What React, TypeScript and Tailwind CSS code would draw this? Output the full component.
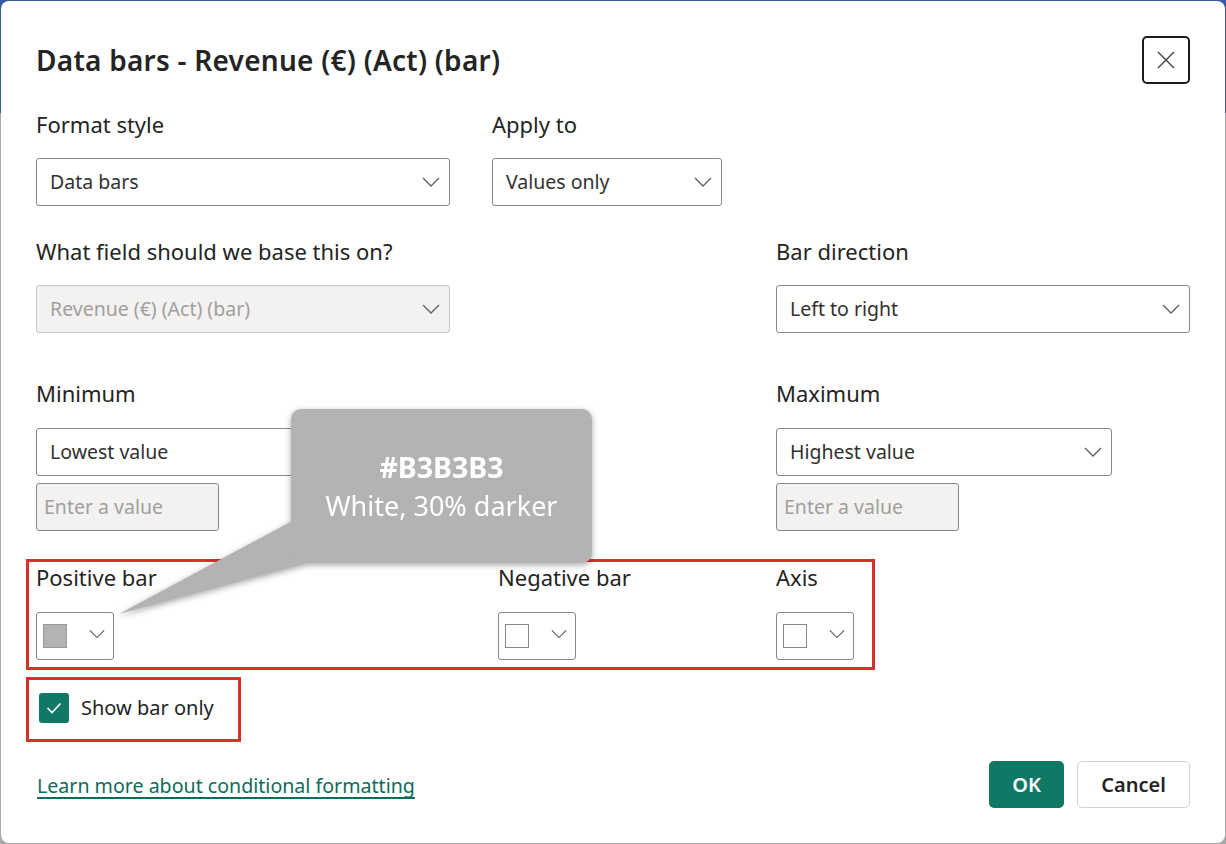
import type React from "react";

const font = { fontFamily: '"Noto Sans", "Open Sans", sans-serif' };

function Chevron({ className = "" }: { className?: string }) {
  return (
    <svg width="18" height="10" viewBox="0 0 18 10" className={className}>
      <polyline points="1,1 9,9 17,1" fill="none" stroke="#605e5c" strokeWidth="1.3" />
    </svg>
  );
}

function Select({
  value,
  width,
  disabled = false,
}: {
  value: string;
  width: string;
  disabled?: boolean;
}) {
  return (
    <div
      className={`${width} h-[48px] flex items-center justify-between pl-[13px] pr-[9px] rounded-[3px] border ${
        disabled ? "bg-[#f3f2f1] border-[#c8c6c4] text-[#a19f9d]" : "bg-white border-[#8a8886] text-[#323130]"
      }`}
    >
      <span className="text-[19.5px]">{value}</span>
      <Chevron />
    </div>
  );
}

function ValueInput() {
  return (
    <div className="w-[183px] h-[48px] flex items-center pl-[7px] bg-[#f3f2f1] border border-[#8a8886] rounded-[3px] text-[19.5px] text-[#a19f9d]">
      Enter a value
    </div>
  );
}

function ColorPicker({ color }: { color?: string }) {
  return (
    <div className="w-[78px] h-[48px] flex items-start pt-[11px] pl-[6px] bg-white border border-[#8a8886] rounded-[3px]">
      <div
        className={`w-[24px] h-[24px] border ${color ? "border-[#9a9a9a]" : "border-[#8a8886]"}`}
        style={{ backgroundColor: color ?? "#ffffff" }}
      />
      <Chevron className="ml-[22px] mt-[5px] w-[16px]" />
    </div>
  );
}

function Label({ children }: { children: React.ReactNode }) {
  return <div className="h-[28px] leading-[24px] text-[22px] text-[#242424]">{children}</div>;
}

export default function App() {
  return (
    <div
      className="w-[1226px] h-[844px] p-px bg-[linear-gradient(to_bottom,#3b5aa6_113px,#a8a8a8_113px)]"
      style={font}
    >
      <div className="relative w-full h-full bg-white rounded-[8px] pl-[35px] pr-[35px]">
        {/* header */}
        <div className="flex items-center justify-between pt-[35px]">
          <h1 className="text-[28px] font-semibold text-[#242424] tracking-[0.25px]">
            Data bars - Revenue (€) (Act) (bar)
          </h1>
          <button className="w-[48px] h-[48px] flex items-center justify-center border-2 border-[#1b1b1b] rounded-[5px]">
            <svg width="20" height="20" viewBox="0 0 20 20">
              <path d="M2 2 L18 18 M18 2 L2 18" stroke="#424242" strokeWidth="1.4" />
            </svg>
          </button>
        </div>

        {/* format style / apply to */}
        <div className="flex gap-[42px] mt-[28px]">
          <div className="flex flex-col gap-[18px]">
            <Label>Format style</Label>
            <Select value="Data bars" width="w-[414px]" />
          </div>
          <div className="flex flex-col gap-[18px]">
            <Label>Apply to</Label>
            <Select value="Values only" width="w-[230px]" />
          </div>
        </div>

        {/* field / direction */}
        <div className="flex justify-between mt-[33px]">
          <div className="flex flex-col gap-[18px]">
            <Label>What field should we base this on?</Label>
            <Select value="Revenue (€) (Act) (bar)" width="w-[414px]" disabled />
          </div>
          <div className="flex flex-col gap-[18px]">
            <Label>Bar direction</Label>
            <Select value="Left to right" width="w-[414px]" />
          </div>
        </div>

        {/* minimum / maximum */}
        <div className="flex justify-between mt-[48px]">
          <div className="flex flex-col">
            <Label>Minimum</Label>
            <div className="mt-[19px]">
              <Select value="Lowest value" width="w-[336px]" />
            </div>
            <div className="mt-[7px]">
              <ValueInput />
            </div>
          </div>
          <div className="flex flex-col w-[414px]">
            <Label>Maximum</Label>
            <div className="mt-[19px]">
              <Select value="Highest value" width="w-[336px]" />
            </div>
            <div className="mt-[7px]">
              <ValueInput />
            </div>
          </div>
        </div>

        {/* colors */}
        <div className="-ml-[10px] mt-[28px] w-[849px] h-[111px] border-[3px] border-[#d9302a] pl-[7px] pt-[3px] grid grid-cols-[462px_278px_78px]">
          <div className="flex flex-col gap-[19px]">
            <Label>Positive bar</Label>
            <ColorPicker color="#b3b3b3" />
          </div>
          <div className="flex flex-col gap-[19px]">
            <Label>Negative bar</Label>
            <ColorPicker />
          </div>
          <div className="flex flex-col gap-[19px]">
            <Label>Axis</Label>
            <ColorPicker />
          </div>
        </div>

        {/* show bar only */}
        <div className="-ml-[10px] mt-[7px] w-[215px] h-[65px] border-[3px] border-[#d9302a] flex items-center pl-[10px] pb-[3px]">
          <div className="w-[30px] h-[30px] rounded-[3px] bg-[#117865] flex items-center justify-center">
            <svg width="16" height="12" viewBox="0 0 16 12">
              <polyline points="1.5,6 6,10.5 14.5,1.5" fill="none" stroke="white" strokeWidth="1.6" />
            </svg>
          </div>
          <span className="ml-[12px] text-[20px] text-[#242424]">Show bar only</span>
        </div>

        {/* footer */}
        <div className="flex items-center justify-between mt-[19px]">
          <a className="ml-[1px] mt-[3px] text-[19.6px] text-[#0f6b5c] underline underline-offset-[4px] decoration-[1.5px]">
            Learn more about conditional formatting
          </a>
          <div className="flex gap-[13px]">
            <button className="w-[75px] h-[47px] rounded-[5px] bg-[#117865] text-white text-[20px] font-semibold">
              OK
            </button>
            <button className="w-[113px] h-[47px] rounded-[5px] bg-white border border-[#d1d1d1] text-[#242424] text-[20px] font-semibold">
              Cancel
            </button>
          </div>
        </div>

        {/* callout tooltip */}
        <div className="absolute left-[110px] top-[408px] w-[500px] h-[220px] drop-shadow-[0_2px_3px_rgba(0,0,0,0.35)]">
          <svg width="500" height="220" viewBox="0 0 500 220" className="absolute left-0 top-0">
            <polygon points="185,110 8,205 196,154" fill="#b3b3b3" />
          </svg>
          <div className="absolute left-[180px] top-0 w-[301px] h-[154px] rounded-[10px] bg-[#b3b3b3] flex flex-col items-center pt-[40px] text-white">
            <div className="text-[28.5px] font-bold leading-[36px]">#B3B3B3</div>
            <div className="text-[27px] leading-[36px] mt-[3px]">White, 30% darker</div>
          </div>
        </div>
      </div>
    </div>
  );
}
